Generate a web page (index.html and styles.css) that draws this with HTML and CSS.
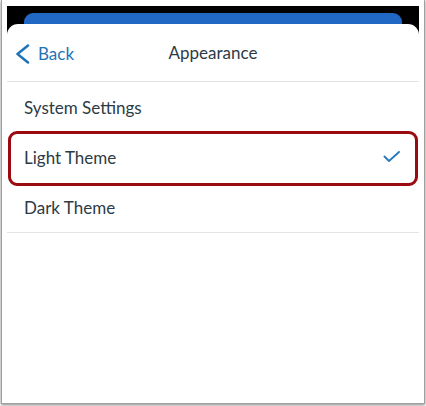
FILE: index.html
```html
<!DOCTYPE html>
<html lang="en">
<head>
<meta charset="utf-8">
<title>Appearance</title>
<link rel="stylesheet" href="styles.css">
</head>
<body>
<div class="frame">
  <div class="phone">
    <div class="backdrop-bar"></div>
    <div class="sheet">
      <header class="nav">
        <a class="back" href="#">
          <svg class="chev" width="16" height="20" viewBox="0 0 16 20" aria-hidden="true">
            <polyline points="13,1.5 2.5,10 13,18.5" fill="none" stroke="#1f74b8" stroke-width="2.5" stroke-linecap="round" stroke-linejoin="round"/>
          </svg>
          <span>Back</span>
        </a>
        <h1 class="title">Appearance</h1>
      </header>
      <ul class="options">
        <li class="option">System Settings</li>
        <li class="option selected">Light Theme
          <svg class="check" width="18" height="12" viewBox="0 0 18 12" aria-hidden="true">
            <polyline points="1.5,5.5 6,10 16,1" fill="none" stroke="#2b7abc" stroke-width="1.9" stroke-linecap="round" stroke-linejoin="round"/>
          </svg>
        </li>
        <li class="option">Dark Theme</li>
        <li class="highlight" aria-hidden="true"></li>
      </ul>
    </div>
  </div>
</div>
</body>
</html>
```
FILE: styles.css
```css
* { box-sizing: border-box; }
html, body { margin: 0; padding: 0; background: #fff; }
body {
  width: 426px;
  height: 406px;
  overflow: hidden;
  font-family: Lato, "Noto Sans", sans-serif;
}
.frame {
  margin-left: 1px;
  width: 424px;
  height: 404px;
  border: 1px solid #a0a0a0;
  border-top: none;
  box-shadow: 0 1px 3px rgba(0,0,0,0.5);
  padding: 6px 5px 0 5px;
  background: #fff;
}
.phone {
  background: #000;
  height: 100%;
  display: flex;
  flex-direction: column;
  padding-top: 7px;
}
.backdrop-bar {
  height: 11px;
  margin: 0 17px;
  background: #2167c4;
  border-radius: 9px 9px 0 0;
  flex: none;
}
.sheet {
  flex: 1;
  background: #fff;
  border-radius: 11px 11px 0 0;
  display: flex;
  flex-direction: column;
}
.nav {
  height: 58px;
  border-bottom: 1px solid #e3e3e3;
  display: flex;
  align-items: center;
  justify-content: center;
  position: relative;
  flex: none;
}
.back {
  position: absolute;
  left: 8px;
  top: 19px;
  display: flex;
  align-items: center;
  gap: 7px;
  color: #1f74b8;
  text-decoration: none;
  font-size: 17px;
}
.chev { display: block; }
.title {
  margin: 0;
  font-size: 17px;
  font-weight: 400;
  color: #2d3b45;
}
.options {
  list-style: none;
  margin: 0;
  padding: 0;
  position: relative;
  border-bottom: 1px solid #e3e3e3;
}
.option {
  height: 50px;
  display: flex;
  align-items: center;
  justify-content: space-between;
  padding: 0 18px 0 17px;
  font-size: 17px;
  color: #2d3b45;
}
.check { display: block; }
.highlight {
  position: absolute;
  left: 1px;
  right: 1px;
  top: 49px;
  height: 55px;
  border: 3px solid #9b0a10;
  border-radius: 9px;
}
```
